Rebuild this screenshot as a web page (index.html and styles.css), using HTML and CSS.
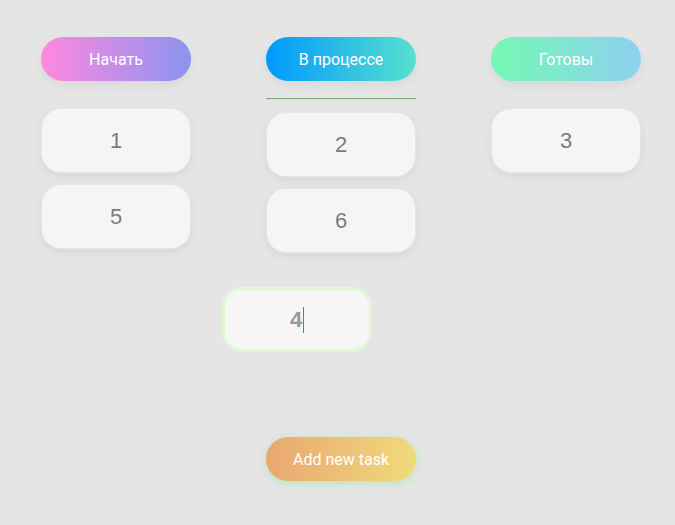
FILE: index.html
```html
<!DOCTYPE html>
<html lang="ru">
<head>
<meta charset="utf-8">
<link rel="stylesheet" href="styles.css">
</head>
<body>
<div class="board">
  <div class="column">
    <div class="head head-start">Начать</div>
    <div class="list">
      <div class="card">1</div>
      <div class="card">5</div>
    </div>
  </div>
  <div class="column">
    <div class="head head-progress">В процессе</div>
    <div class="drop-line"></div>
    <div class="list list-shift">
      <div class="card">2</div>
      <div class="card">6</div>
    </div>
  </div>
  <div class="column">
    <div class="head head-done">Готовы</div>
    <div class="list">
      <div class="card">3</div>
    </div>
  </div>
  <div class="dragged"><span class="drag-text">4</span><span class="caret"></span></div>
</div>
<div class="footer">
  <button class="add-btn">Add new task</button>
</div>
</body>
</html>
```

FILE: styles.css
```css
html, body {
  margin: 0;
  padding: 0;
  background: #e5e5e5;
  width: 675px;
  height: 525px;
  overflow: hidden;
  font-family: Roboto, "Liberation Sans", sans-serif;
}
.board {
  position: relative;
  display: flex;
  gap: 75px;
  padding: 37px 0 0 41px;
  height: 353px;
  box-sizing: border-box;
}
.column {
  width: 150px;
  display: flex;
  flex-direction: column;
}
.head {
  height: 44px;
  border-radius: 22px;
  color: #fff;
  font-size: 16px;
  display: flex;
  align-items: center;
  justify-content: center;
  box-shadow: 0 4px 10px rgba(0,0,0,0.06);
}
.head-start { background: linear-gradient(90deg, #ff88df, #8b94f0); }
.head-progress { background: linear-gradient(90deg, #0099fd, #57e0cf); }
.head-done { background: linear-gradient(90deg, #74f9b2, #8dd1f0); }
.list {
  display: flex;
  flex-direction: column;
  gap: 11px;
  margin-top: 27px;
}
.drop-line {
  margin-top: 17px;
  height: 1px;
  background: #7fae7a;
  border-bottom: 1px solid #bdf2b2;
}
.list-shift { margin-top: 12px; }
.card {
  height: 65px;
  box-sizing: border-box;
  border-radius: 20px;
  background: #f5f5f5;
  border: 1px solid #e6e6e6;
  box-shadow: 0 3px 8px rgba(0,0,0,0.06);
  display: flex;
  align-items: center;
  justify-content: center;
  font-family: "Liberation Sans", Arial, sans-serif;
  font-size: 22px;
  color: #7c7c7c;
}
.dragged {
  position: absolute;
  left: 222px;
  top: 287px;
  width: 150px;
  height: 65px;
  box-sizing: border-box;
  border-radius: 20px;
  background: #f5f6f5;
  border: 3px solid #e0f7d8;
  display: flex;
  align-items: center;
  justify-content: center;
  font-family: "Liberation Sans", Arial, sans-serif;
  font-size: 22px;
  font-weight: bold;
  color: #9a9a9a;
}
.caret {
  display: inline-block;
  width: 1px;
  height: 26px;
  background: #777;
  margin-left: 1px;
}
.footer {
  display: flex;
  padding: 84px 0 0 266px;
}
.add-btn {
  width: 150px;
  height: 44px;
  border: none;
  border-radius: 22px;
  background: linear-gradient(90deg, #e9a770, #f0da7b);
  color: #fff;
  font-family: Roboto, "Liberation Sans", sans-serif;
  font-size: 16px;
  box-shadow: 0 2px 8px rgba(140, 235, 140, 0.55);
  padding: 0;
}
```
